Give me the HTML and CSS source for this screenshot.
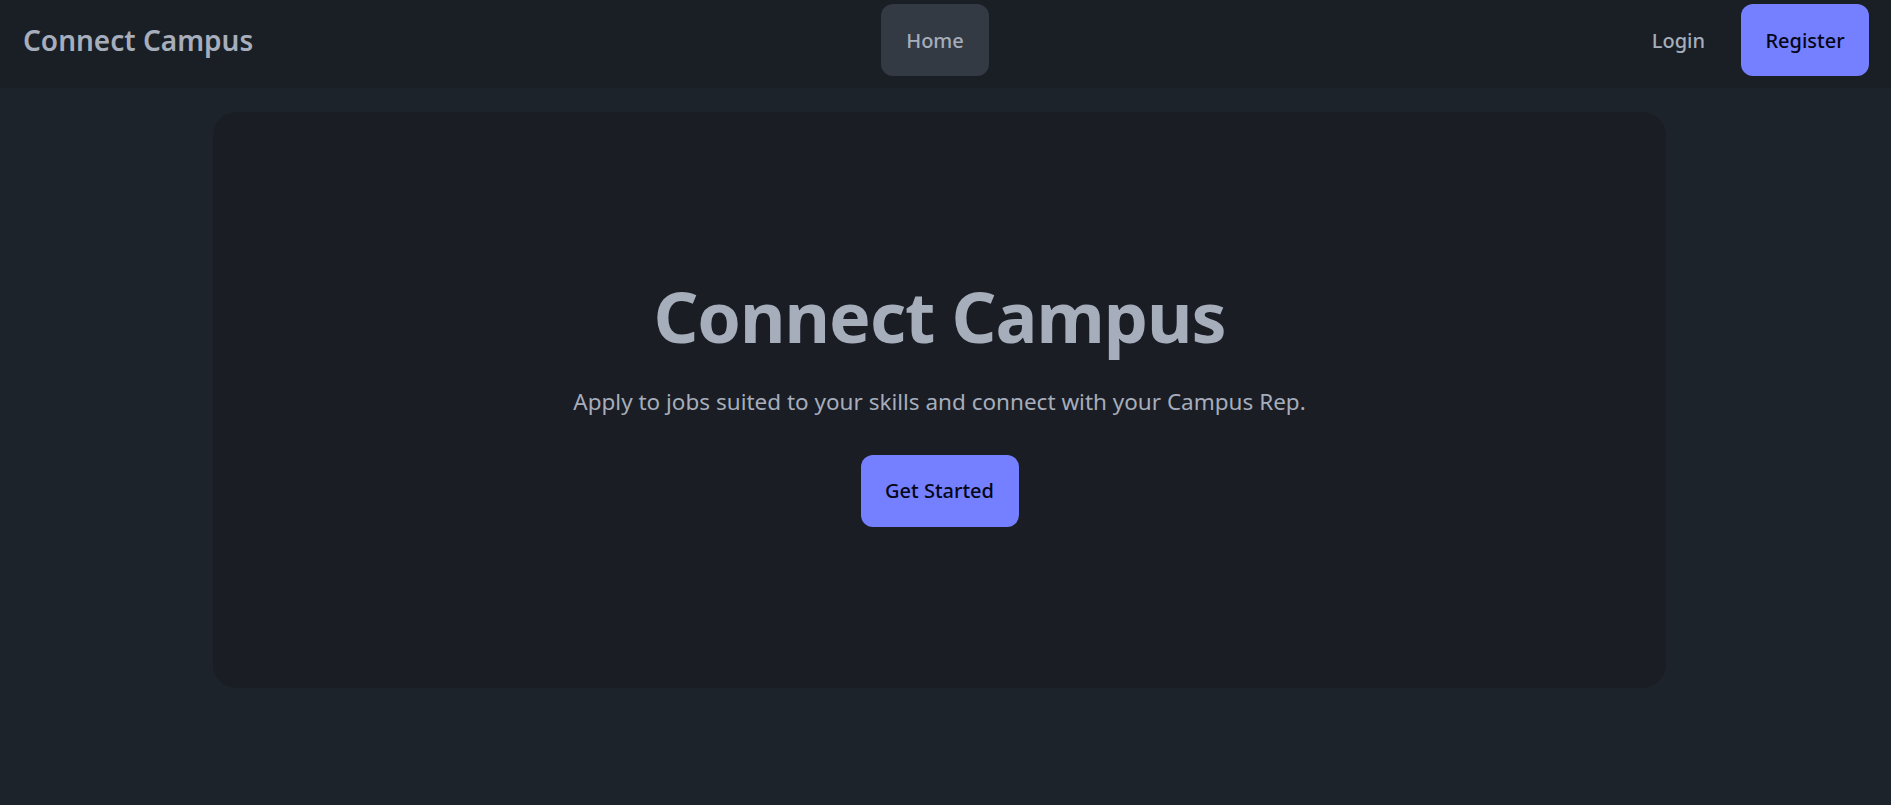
FILE: index.html
```html
<!DOCTYPE html>
<html lang="en">
<head>
    <title>Connect Campus</title>
    <meta charset="UTF-8">
    <meta name="viewport" content="width=device-width, initial-scale=1.0">
    <link rel="stylesheet" href="styles.css">
</head>
<body>
    <nav class="navbar">
        <div class="navbar-start">
            <a class="brand" href="#">Connect Campus</a>
        </div>
        <div class="navbar-center">
            <a class="btn btn-ghost active" href="#">Home</a>
        </div>
        <div class="navbar-end">
            <a class="btn btn-link" href="#">Login</a>
            <a class="btn btn-primary" href="#">Register</a>
        </div>
    </nav>

    <main class="hero">
        <div class="hero-content">
            <h1 class="title">Connect Campus</h1>
            <p class="subtitle">Apply to jobs suited to your skills and connect with your Campus Rep.</p>
            <a class="btn btn-primary btn-start" href="#">Get Started</a>
        </div>
    </main>
</body>
</html>
```

FILE: styles.css
```css
body {
    margin: 0;
    height: 100vh;
    background-color: #1d232a;
    color: #a6adbb;
    font-family: "Noto Sans", "Open Sans", sans-serif;
}

a {
    text-decoration: none;
    color: inherit;
}

.navbar {
    display: grid;
    grid-template-columns: 1fr auto 1fr;
    align-items: center;
    height: 72px;
    padding: 4px 22px 12px 23px;
    background-color: #1a1e25;
}

.navbar-center {
    margin-right: 22px;
}

.navbar-end {
    display: flex;
    justify-content: flex-end;
    align-items: center;
    gap: 8px;
}

.brand {
    font-size: 28px;
    font-weight: 600;
}

.btn {
    display: flex;
    align-items: center;
    justify-content: center;
    height: 72px;
    padding: 0 21px;
    border-radius: 12px;
    font-size: 20px;
    font-weight: 500;
    box-sizing: border-box;
}

.btn.active {
    width: 108px;
    padding: 0;
    background-color: #333a43;
}

.btn-link {
    padding: 0 28px;
}

.btn-primary {
    width: 128px;
    padding: 0;
    background-color: #7480ff;
    color: #050617;
}

.hero {
    display: flex;
    align-items: center;
    justify-content: center;
    width: 1453px;
    height: 576px;
    margin: 24px 0 0 213px;
    background-color: #1a1d24;
    border-radius: 24px;
}

.hero-content {
    display: flex;
    flex-direction: column;
    align-items: center;
    text-align: center;
}

.title {
    margin: 0;
    font-size: 70px;
    font-weight: 700;
    letter-spacing: -1px;
    line-height: 1.2;
}

.subtitle {
    margin: 28px 0 38px;
    font-size: 22.5px;
}

.btn-start {
    width: 158px;
}
```
